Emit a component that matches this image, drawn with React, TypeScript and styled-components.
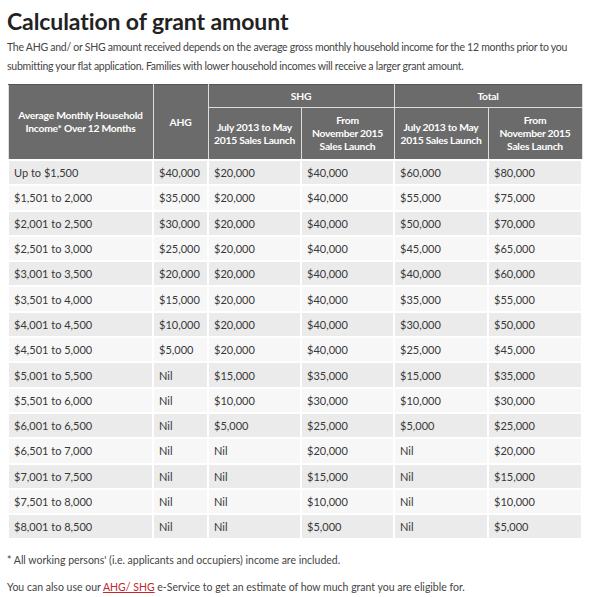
import React from 'react'
import styled, { createGlobalStyle } from 'styled-components'

const GlobalStyle = createGlobalStyle`
  body {
    margin: 0;
    background: #fff;
    font-family: Lato, "Open Sans", sans-serif;
    color: #333;
  }
`

const Page = styled.div`
  padding: 6px 11px 0 7px;
`

const Title = styled.h1`
  margin: 0;
  font-size: 23px;
  font-weight: 700;
  color: #222;
  line-height: 30px;
  letter-spacing: -0.1px;
`

const Intro = styled.p`
  margin: 2px 0 8px;
  font-size: 10.5px;
  line-height: 19px;
  color: #444;
  letter-spacing: -0.26px;
  white-space: nowrap;
`

const Table = styled.table`
  width: 574px;
  border-collapse: collapse;
  table-layout: fixed;
  font-size: 11px;
`

const Head = styled.th<{ $group?: boolean }>`
  background: #6b6b6b;
  color: #fff;
  font-weight: 700;
  font-size: 10.3px;
  line-height: 13px;
  letter-spacing: -0.25px;
  text-align: center;
  padding: 0 2px;
  white-space: nowrap;
  height: ${(p) => (p.$group ? '22px' : '51px')};
  border: 1px solid #ddd;
  border-top-color: #555;
`

const Row = styled.tr<{ $odd: boolean }>`
  background: ${(p) => (p.$odd ? '#ebebeb' : '#f7f7f7')};
`

const Cell = styled.td`
  height: 23.3px;
  padding: 0 5px;
  border: 2px solid #fff;
  color: #383838;
  white-space: nowrap;
`

const Note = styled.p`
  margin: 0;
  font-size: 10.5px;
  line-height: 14px;
  color: #444;
  padding-top: 13px;
`

const Link = styled.a`
  color: #c1272d;
  text-decoration: underline;
`

const rows: string[][] = [
  ['Up to $1,500', '$40,000', '$20,000', '$40,000', '$60,000', '$80,000'],
  ['$1,501 to 2,000', '$35,000', '$20,000', '$40,000', '$55,000', '$75,000'],
  ['$2,001 to 2,500', '$30,000', '$20,000', '$40,000', '$50,000', '$70,000'],
  ['$2,501 to 3,000', '$25,000', '$20,000', '$40,000', '$45,000', '$65,000'],
  ['$3,001 to 3,500', '$20,000', '$20,000', '$40,000', '$40,000', '$60,000'],
  ['$3,501 to 4,000', '$15,000', '$20,000', '$40,000', '$35,000', '$55,000'],
  ['$4,001 to 4,500', '$10,000', '$20,000', '$40,000', '$30,000', '$50,000'],
  ['$4,501 to 5,000', '$5,000', '$20,000', '$40,000', '$25,000', '$45,000'],
  ['$5,001 to 5,500', 'Nil', '$15,000', '$35,000', '$15,000', '$35,000'],
  ['$5,501 to 6,000', 'Nil', '$10,000', '$30,000', '$10,000', '$30,000'],
  ['$6,001 to 6,500', 'Nil', '$5,000', '$25,000', '$5,000', '$25,000'],
  ['$6,501 to 7,000', 'Nil', 'Nil', '$20,000', 'Nil', '$20,000'],
  ['$7,001 to 7,500', 'Nil', 'Nil', '$15,000', 'Nil', '$15,000'],
  ['$7,501 to 8,000', 'Nil', 'Nil', '$10,000', 'Nil', '$10,000'],
  ['$8,001 to 8,500', 'Nil', 'Nil', '$5,000', 'Nil', '$5,000'],
]

const widths = [145, 55, 93, 93, 94, 94]

const EarlyLaunch = () => (
  <>
    July 2013 to May
    <br />
    2015 Sales Launch
  </>
)

const LateLaunch = () => (
  <>
    From
    <br />
    November 2015
    <br />
    Sales Launch
  </>
)

export default function App() {
  return (
    <Page>
      <GlobalStyle />
      <Title>Calculation of grant amount</Title>
      <Intro>
        The AHG and/ or SHG amount received depends on the average gross monthly household income for the 12 months prior to you
        <br />
        submitting your flat application. Families with lower household incomes will receive a larger grant amount.
      </Intro>
      <Table>
        <colgroup>
          {widths.map((w, i) => (
            <col key={i} style={{ width: w }} />
          ))}
        </colgroup>
        <thead>
          <tr>
            <Head rowSpan={2}>
              Average Monthly Household
              <br />
              Income* Over 12 Months
            </Head>
            <Head rowSpan={2}>AHG</Head>
            <Head $group colSpan={2}>SHG</Head>
            <Head $group colSpan={2}>Total</Head>
          </tr>
          <tr>
            <Head><EarlyLaunch /></Head>
            <Head><LateLaunch /></Head>
            <Head><EarlyLaunch /></Head>
            <Head><LateLaunch /></Head>
          </tr>
        </thead>
        <tbody>
          {rows.map((r, i) => (
            <Row key={i} $odd={i % 2 === 0}>
              {r.map((c, j) => (
                <Cell key={j}>{c}</Cell>
              ))}
            </Row>
          ))}
        </tbody>
      </Table>
      <Note>* All working persons' (i.e. applicants and occupiers) income are included.</Note>
      <Note>
        You can also use our <Link href="#">AHG/ SHG</Link> e-Service to get an estimate of how much grant you are eligible for.
      </Note>
    </Page>
  )
}
